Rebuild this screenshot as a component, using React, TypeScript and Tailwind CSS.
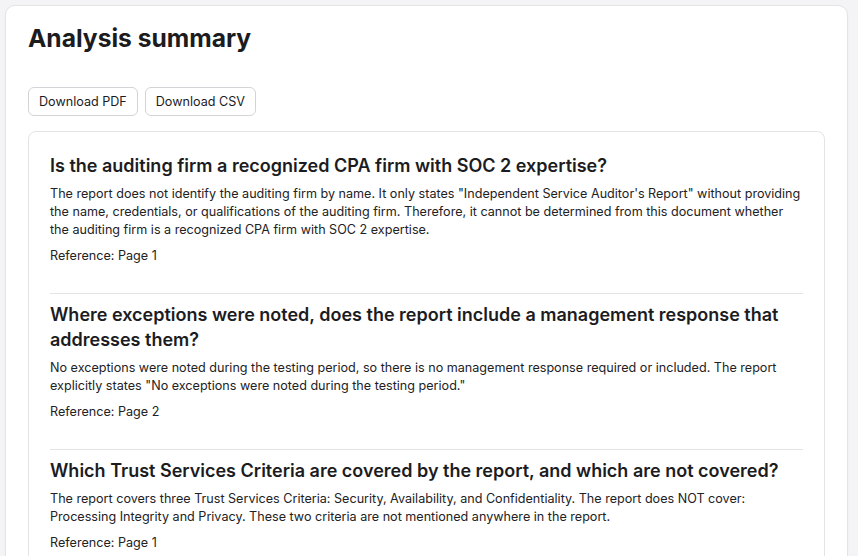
import React from "react";

const sections = [
  {
    q: "Is the auditing firm a recognized CPA firm with SOC 2 expertise?",
    a: "The report does not identify the auditing firm by name. It only states \"Independent Service Auditor's Report\" without providing the name, credentials, or qualifications of the auditing firm. Therefore, it cannot be determined from this document whether the auditing firm is a recognized CPA firm with SOC 2 expertise.",
    ref: "Reference: Page 1",
  },
  {
    q: "Where exceptions were noted, does the report include a management response that addresses them?",
    a: "No exceptions were noted during the testing period, so there is no management response required or included. The report explicitly states \"No exceptions were noted during the testing period.\"",
    ref: "Reference: Page 2",
  },
  {
    q: "Which Trust Services Criteria are covered by the report, and which are not covered?",
    a: "The report covers three Trust Services Criteria: Security, Availability, and Confidentiality. The report does NOT cover: Processing Integrity and Privacy. These two criteria are not mentioned anywhere in the report.",
    ref: "Reference: Page 1",
  },
];

export default function App() {
  return (
    <div
      className="w-[858px] h-[556px] overflow-hidden bg-[#f4f4f6]"
      style={{ fontFamily: "Inter, 'Liberation Sans', sans-serif" }}
    >
      <div className="ml-[5px] mt-[5px] w-[843px] h-[600px] rounded-[10px] border border-[#e4e4e7] bg-white shadow-[0_1px_2px_rgba(0,0,0,0.04)] px-[22px] pt-[16px]">
        <h1 className="text-[24.6px] leading-[32px] font-bold text-[#1c1c1f]">
          Analysis summary
        </h1>
        <div className="mt-[33px] flex gap-[7px]">
          <button className="rounded-[6px] border border-[#d4d4d8] bg-white px-[10px] py-[5px] text-[12.6px] leading-[17px] text-[#1c1c1f]">
            Download PDF
          </button>
          <button className="rounded-[6px] border border-[#d4d4d8] bg-white px-[10px] py-[5px] text-[12.6px] leading-[17px] text-[#1c1c1f]">
            Download CSV
          </button>
        </div>
        <div className="mt-[15px] rounded-[8px] border border-[#e4e4e7] bg-white px-[21px] pt-[21px] pb-[22px]">
          {sections.map((s, i) => (
            <div
              key={i}
              className={
                i < sections.length - 1
                  ? "pb-[28px] mb-[8px] border-b border-[#e4e4e7]"
                  : ""
              }
            >
              <h2 className="text-[18px] leading-[25px] font-semibold text-[#1c1c1f]">
                {s.q}
              </h2>
              <p className="mt-[7px] text-[12.6px] leading-[18px] text-[#222225]">
                {s.a}
              </p>
              <p className="mt-[8px] text-[12.6px] leading-[18px] text-[#222225]">
                {s.ref}
              </p>
            </div>
          ))}
        </div>
      </div>
    </div>
  );
}
